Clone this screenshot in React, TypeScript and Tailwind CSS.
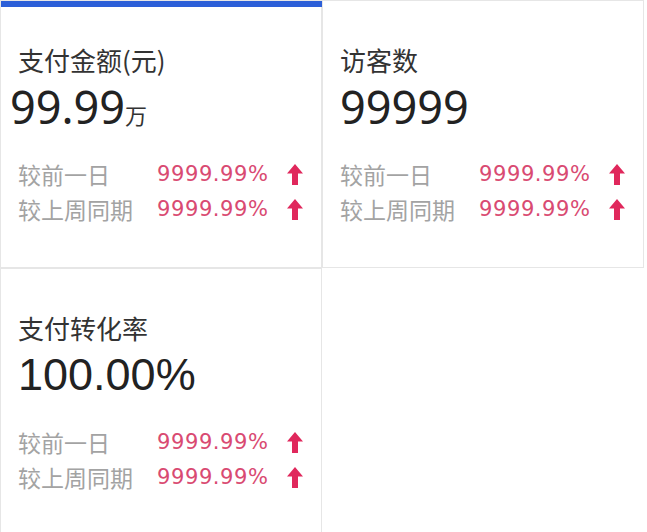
const cjk = "font-['Noto_Sans_CJK_SC',sans-serif]";

type Stat = {
  title: string;
  value: string;
  unit?: string;
  valueFont: string;
  valueShift?: string;
  active?: boolean;
};

const stats: Stat[] = [
  {
    title: "支付金额(元)",
    value: "99.99",
    unit: "万",
    valueFont: "font-['Noto_Sans',sans-serif]",
    valueShift: "-ml-[8px]",
    active: true,
  },
  { title: "访客数", value: "99999", valueFont: "font-['Noto_Sans',sans-serif]" },
  { title: "支付转化率", value: "100.00%", valueFont: "font-['Liberation_Sans',sans-serif]" },
];

function UpArrow() {
  return (
    <svg width="16" height="21" viewBox="0 0 16 21" className="shrink-0">
      <path d="M8 0 L16 9.5 H11 V21 H5 V9.5 H0 Z" fill="#e0285c" />
    </svg>
  );
}

function Compare({ label }: { label: string }) {
  return (
    <div className="flex items-center h-[35px]">
      <span className={`w-[139px] text-[23px] text-[#a3a3a3] ${cjk}`}>{label}</span>
      <span className="w-[130px] text-[21px] tracking-[0.6px] text-[#d94a72] font-['DejaVu_Sans',sans-serif]">
        9999.99%
      </span>
      <UpArrow />
    </div>
  );
}

function StatCard({ stat }: { stat: Stat }) {
  return (
    <div className="relative w-[322px] h-[268px] border border-[#e6e6e6] bg-white pt-[42px] pl-[17px]">
      {stat.active && <div className="absolute left-0 top-0 w-[322px] h-[6px] bg-[#2c5fd8]" />}
      <div className={`text-[26px] leading-[34px] text-[#333] ${cjk}`}>{stat.title}</div>
      <div className={`mt-[6px] flex items-baseline h-[48px] ${stat.valueShift ?? ""}`}>
        <span className={`text-[45px] leading-[48px] text-[#222] ${stat.valueFont}`}>{stat.value}</span>
        {stat.unit && (
          <span className={`text-[22px] leading-[48px] text-[#333] ${cjk}`}>{stat.unit}</span>
        )}
      </div>
      <div className="mt-[26px]">
        <Compare label="较前一日" />
        <Compare label="较上周同期" />
      </div>
    </div>
  );
}

export default function App() {
  return (
    <main className="w-[647px] h-[532px] bg-white overflow-hidden">
      <div className="flex flex-wrap w-[644px]">
        {stats.map((s) => (
          <StatCard key={s.title} stat={s} />
        ))}
      </div>
    </main>
  );
}
